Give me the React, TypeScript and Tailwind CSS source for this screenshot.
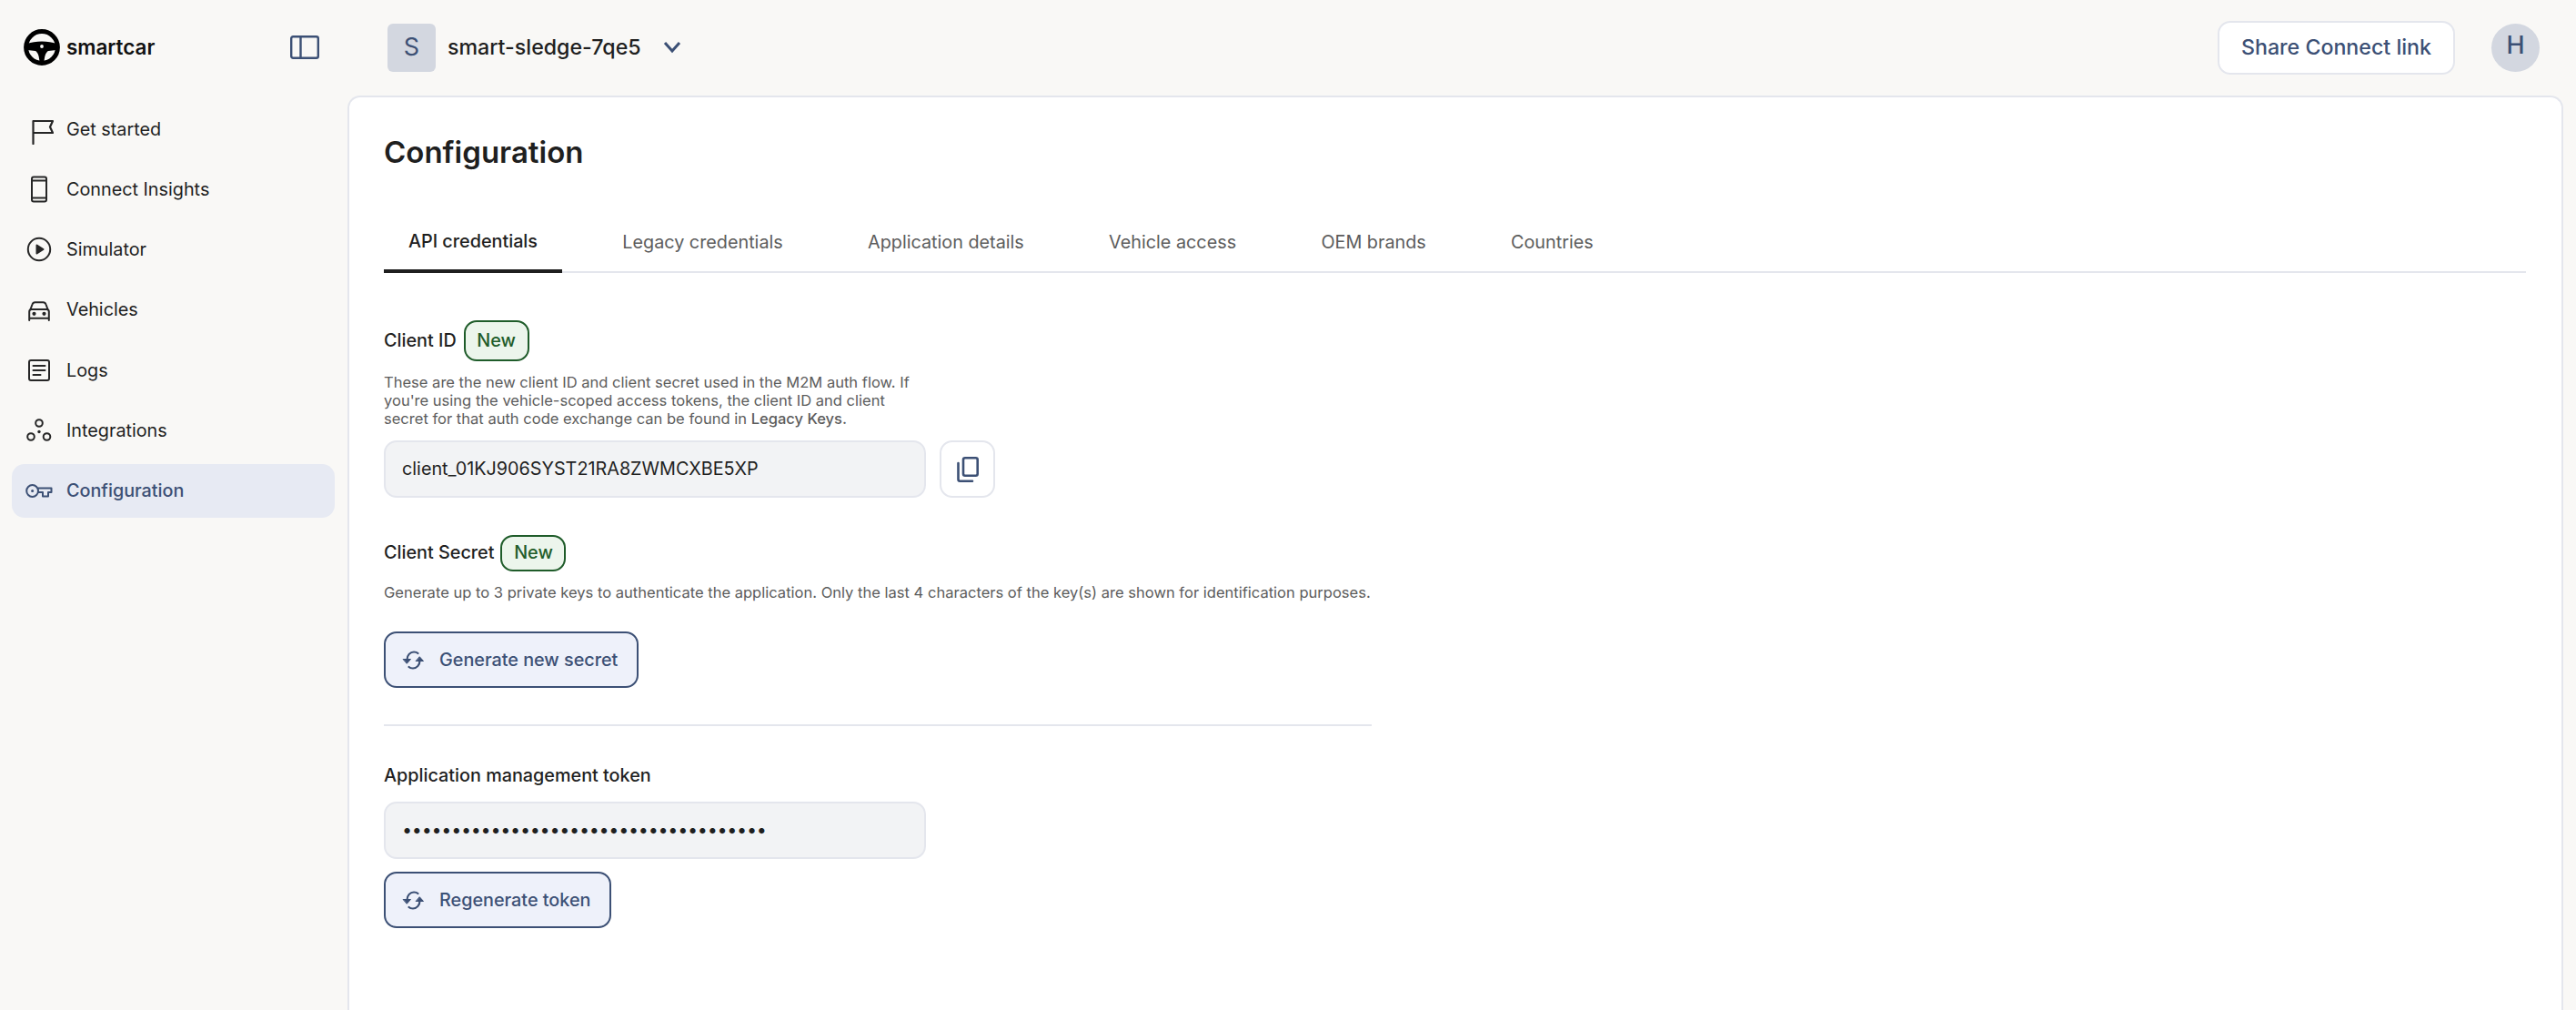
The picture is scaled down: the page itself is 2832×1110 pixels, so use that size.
import React from "react";

const navy = "#3c5075";

function Logo() {
  return (
    <svg width="40" height="40" viewBox="0 0 40 40" fill="none">
      <circle cx="20" cy="20" r="17.4" stroke="#000" strokeWidth="5" />
      <path d="M4 16 C12 12.5 28 12.5 36 16 L36 23 L27 24 C24 26 23 30 22.5 36 L17.5 36 C17 30 16 26 13 24 L4 23 Z" fill="#000" />
      <circle cx="20" cy="19" r="1.9" fill="#f9f8f6" />
    </svg>
  );
}

const strokeProps = { fill: "none", stroke: "#262626", strokeWidth: 2, strokeLinecap: "round" as const, strokeLinejoin: "round" as const };

function Flag() {
  return (
    <svg width="32" height="34" viewBox="0 0 32 34" {...strokeProps} strokeWidth={2.2}>
      <path d="M9.5 33 V8 H31 L28 14.5 L31 21 H9.5" />
    </svg>
  );
}
function Phone() {
  return (
    <svg width="30" height="30" viewBox="0 0 30 30" {...strokeProps}>
      <rect x="7" y="1.5" width="16" height="27" rx="2" />
      <path d="M7 5.5 H23 M7 24.5 H23" />
    </svg>
  );
}
function Play() {
  return (
    <svg width="30" height="30" viewBox="0 0 30 30" {...strokeProps}>
      <circle cx="15" cy="15" r="12.2" />
      <path d="M12.5 10.5 L19.5 15 L12.5 19.5 Z" fill="#262626" />
    </svg>
  );
}
function Car() {
  return (
    <svg width="30" height="30" viewBox="0 0 30 30" {...strokeProps}>
      <path d="M5.5 15 L7.5 9.5 C8 8 9 7.2 10.5 7.2 H19.5 C21 7.2 22 8 22.5 9.5 L24.5 15" />
      <path d="M4.2 27 V17.5 C4.2 16 5.2 15 6.7 15 H23.3 C24.8 15 25.8 16 25.8 17.5 V27 M4.2 24.8 H25.8" />
      <circle cx="9.5" cy="19.8" r="1.1" fill="#262626" />
      <circle cx="20.5" cy="19.8" r="1.1" fill="#262626" />
    </svg>
  );
}
function Logs() {
  return (
    <svg width="30" height="30" viewBox="0 0 30 30" {...strokeProps}>
      <rect x="4" y="4" width="22" height="22" rx="2" />
      <path d="M8.5 10 H21.5 M8.5 15 H21.5 M8.5 20 H16.5" />
    </svg>
  );
}
function Integrations() {
  return (
    <svg width="30" height="30" viewBox="0 0 30 30" {...strokeProps}>
      <circle cx="15" cy="7" r="3.8" />
      <circle cx="6" cy="22" r="3.8" />
      <circle cx="23.5" cy="22" r="3.8" />
      <circle cx="15" cy="16.5" r="1.7" fill="#262626" stroke="none" />
    </svg>
  );
}
function KeyIcon() {
  return (
    <svg width="30" height="30" viewBox="0 0 30 30" fill="none" stroke={navy} strokeWidth="2" strokeLinecap="round" strokeLinejoin="round">
      <circle cx="7.6" cy="15.5" r="6.4" />
      <circle cx="7.6" cy="15.5" r="1.5" fill={navy} stroke="none" />
      <path d="M14 12.5 H28.5 V17 H25 V21.5 H19 V17 H14" />
    </svg>
  );
}
function Refresh() {
  return (
    <svg width="25" height="25" viewBox="0 0 25 25" fill="none" stroke={navy} strokeWidth="2.2" strokeLinecap="round" strokeLinejoin="round">
      <path d="M5.5 12 C5.5 7 9 3.5 13 3.5 C15 3.5 16.5 4 17.5 5" />
      <path d="M1.5 11.5 L9.5 11.5 L5.5 16 Z" fill={navy} strokeWidth="1" />
      <path d="M19.5 13 C19.5 18 16 21.5 12 21.5 C10 21.5 8.5 21 7.5 20" />
      <path d="M15.5 13.5 L23.5 13.5 L19.5 9 Z" fill={navy} strokeWidth="1" />
    </svg>
  );
}
function NavItem({ icon, label, active }: { icon: React.ReactNode; label: string; active?: boolean }) {
  return (
    <div className={`flex h-[59px] items-center gap-[14px] rounded-[14px] pl-[14px] ${active ? "bg-[#e7eaf3] text-[#3c5075] font-medium" : "text-[#1f1f1f]"}`}>
      <span className="flex h-[30px] w-[32px] items-center justify-center">{icon}</span>
      <span className="text-[19.8px] leading-[28px]">{label}</span>
    </div>
  );
}
function Badge({ tall }: { tall?: boolean }) {
  return (
    <span className={`flex w-[72px] items-center justify-center rounded-[14px] border-2 border-[#1f5c2a] bg-[#ecf5ec] text-[19.8px] font-medium text-[#1f5c2a] ${tall ? "h-[45px]" : "h-[40px]"}`}>New</span>
  );
}
function ActionButton({ label, className }: { label: string; className: string }) {
  return (
    <button className={`flex h-[62px] items-center gap-[16px] rounded-[14px] border-2 border-[#3c5075] bg-[#eef1fa] pl-[18px] text-[19.8px] font-medium text-[#3c5075] ${className}`}>
      <Refresh />
      <span className="pt-[1px]">{label}</span>
    </button>
  );
}

const tabs = ["Legacy credentials", "Application details", "Vehicle access", "OEM brands", "Countries"];

export default function App() {
  return (
    <div className="flex h-screen flex-col overflow-hidden bg-[#f9f8f6] font-['Inter',sans-serif]">
      <header className="flex h-[105px] shrink-0 items-center pb-[1px] pl-[26px] pr-[40px]">
        <div className="flex w-[293px] items-center gap-[7px]">
          <Logo />
          <span className="text-[22.4px] font-semibold text-[#111]">smartcar</span>
        </div>
        <svg width="32" height="26" viewBox="0 0 32 26" fill="none" stroke={navy} strokeWidth="2.4">
          <rect x="1.2" y="1.2" width="29.6" height="23.6" rx="2" />
          <path d="M11.5 1.2 V24.8" />
        </svg>
        <div className="ml-[75px] flex h-[53px] w-[53px] items-center justify-center rounded-[6px] bg-[#d3d7e0] text-[27px] text-[#3c5075]">S</div>
        <span className="ml-[13px] text-[23.2px] font-medium text-[#1f1f1f]">smart-sledge-7qe5</span>
        <svg className="ml-[24px]" width="20" height="14" viewBox="0 0 20 14" fill="none" stroke={navy} strokeWidth="3">
          <path d="M2 2 L10 11 L18 2" />
        </svg>
        <button className="ml-auto flex h-[59px] w-[261px] items-center justify-center rounded-[14px] border-2 border-[#e4e6ed] bg-white text-[23.2px] font-medium text-[#3c5075]">Share Connect link</button>
        <div className="ml-[40px] flex h-[53px] w-[53px] items-center justify-center rounded-full bg-[#d3d7e0] pb-[4px] text-[27px] font-medium text-[#3c5075]">H</div>
      </header>
      <div className="flex min-h-0 flex-1">
        <nav className="flex w-[382px] shrink-0 flex-col gap-[7.3px] pl-[13px] pr-[14px] pt-[7px]">
          <NavItem icon={<Flag />} label="Get started" />
          <NavItem icon={<Phone />} label="Connect Insights" />
          <NavItem icon={<Play />} label="Simulator" />
          <NavItem icon={<Car />} label="Vehicles" />
          <NavItem icon={<Logs />} label="Logs" />
          <NavItem icon={<Integrations />} label="Integrations" />
          <NavItem icon={<KeyIcon />} label="Configuration" active />
        </nav>
        <main className="mr-[14px] flex-1 rounded-t-[14px] border-2 border-b-0 border-[#e4e6ed] bg-white pl-[38px] pr-[39px]">
          <h1 className="mt-[38px] text-[33px] font-semibold leading-[44px] text-[#1f1f1f]">Configuration</h1>
          <div className="mt-[46px] flex h-[65px] gap-[39.3px] border-b-2 border-[#e4e6ed]">
            <div className="flex h-[65px] w-[196px] items-center justify-center border-b-4 border-[#1f1f1f] text-[19.8px] font-medium text-[#1f1f1f]">API credentials</div>
            {tabs.map((t) => (
              <div key={t} className="flex h-[63px] items-center px-[27px] text-[19.8px] text-[#5c5c5c]">{t}</div>
            ))}
          </div>
          <div className="mt-[52px] flex items-center gap-[8px] text-[19.8px] font-medium text-[#1f1f1f]">
            <span>Client ID</span>
            <Badge tall />
          </div>
          <p className="mt-[13px] w-[590px] text-[16.55px] leading-[20px] text-[#5c5c5c]">
            These are the new client ID and client secret used in the M2M auth flow. If you're using the vehicle-scoped access tokens, the client ID and client secret for that auth code exchange can be found in <span className="font-medium">Legacy Keys.</span>
          </p>
          <div className="mt-[14px] flex gap-[15px]">
            <div className="flex h-[63px] w-[596px] items-center rounded-[14px] border-2 border-[#e4e6ed] bg-[#f2f3f5] pl-[18px] text-[19.8px] text-[#1f1f1f]">client_01KJ906SYST21RA8ZWMCXBE5XP</div>
            <button className="flex h-[63px] w-[61px] items-center justify-center rounded-[14px] border-2 border-[#e4e6ed] bg-white">
              <svg width="24" height="28" viewBox="0 0 24 28" fill="none" stroke={navy} strokeWidth="2.6" strokeLinejoin="round" strokeLinecap="round">
                <rect x="7" y="1.3" width="15.7" height="19.5" rx="2" />
                <path d="M1.5 7 V25 C1.5 26 2.3 26.7 3.3 26.7 H17" />
              </svg>
            </button>
          </div>
          <div className="mt-[41px] flex items-center gap-[7px] text-[19.8px] font-medium text-[#1f1f1f]">
            <span>Client Secret</span>
            <Badge />
          </div>
          <p className="mt-[13px] text-[16.55px] leading-[20px] text-[#5c5c5c]">Generate up to 3 private keys to authenticate the application. Only the last 4 characters of the key(s) are shown for identification purposes.</p>
          <ActionButton label="Generate new secret" className="mt-[33px] w-[280px]" />
          <div className="mt-[40px] h-[2px] w-[1086px] bg-[#e4e6ed]" />
          <div className="mt-[40px] text-[19.8px] font-medium leading-[28px] text-[#1f1f1f]">Application management token</div>
          <div className="mt-[15px] flex h-[63px] w-[596px] items-center rounded-[14px] border-2 border-[#e4e6ed] bg-[#f2f3f5] pl-[18px] text-[19.8px] tracking-[-0.3px] text-[#1f1f1f]">{"•".repeat(37)}</div>
          <ActionButton label="Regenerate token" className="mt-[14px] w-[250px]" />
        </main>
      </div>
    </div>
  );
}
